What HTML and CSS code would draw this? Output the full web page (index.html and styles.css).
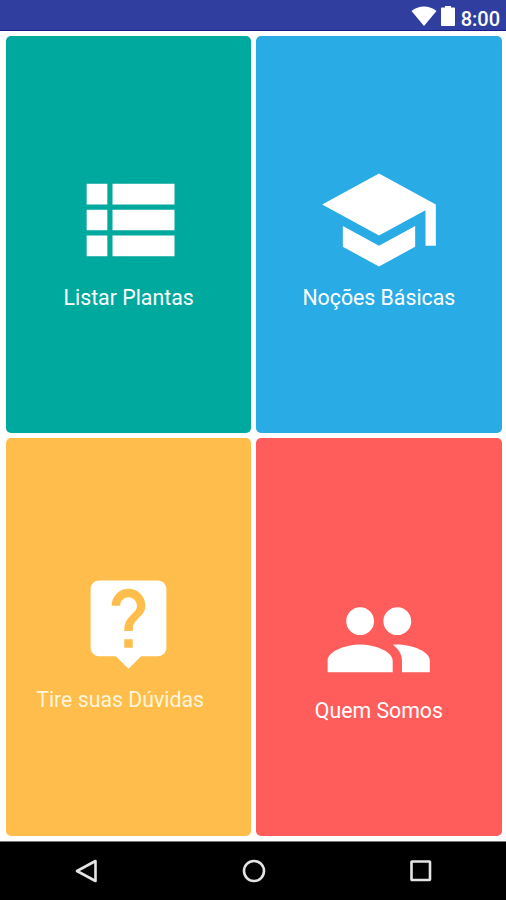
FILE: index.html
```html
<!DOCTYPE html>
<html lang="pt-BR">
<head>
    <meta charset="UTF-8">
    <title>Plantas</title>
    <link rel="stylesheet" href="styles.css">
</head>
<body>
    <div class="status-bar">
        <svg class="wifi" viewBox="0 0 26 20"><path d="M0.5 5C7.5-1 18.5-1 25.5 5L13 20z"/></svg>
        <svg class="battery" viewBox="0 0 14 20"><path d="M4 0h6v1.5h3q1 0 1 1V19q0 1-1 1H1q-1 0-1-1V2.5q0-1 1-1h3z"/></svg>
        <span class="clock">8:00</span>
    </div>

    <main class="menu">
        <a class="tile tile-plants">
            <svg class="icon" viewBox="0 0 24 24"><path d="M4 14h4v-4H4v4zm0 5h4v-4H4v4zM4 9h4V5H4v4zm5 5h12v-4H9v4zm0 5h12v-4H9v4zM9 5v4h12V5H9z"/></svg>
            <span class="label">Listar Plantas</span>
        </a>
        <a class="tile tile-basics">
            <svg class="icon" viewBox="0 0 24 24"><path d="M5 13.18v4L12 21l7-3.82v-4L12 17l-7-3.82zM12 3L1 9l11 6 9-4.91V17h2V9L12 3z"/></svg>
            <span class="label">Noções Básicas</span>
        </a>
        <a class="tile tile-help">
            <svg class="icon" viewBox="0 0 24 24"><path d="M19 2H5c-1.1 0-2 .9-2 2v14c0 1.1.9 2 2 2h4l3 3 3-3h4c1.1 0 2-.9 2-2V4c0-1.1-.9-2-2-2zm-6 16h-2v-2h2v2zm2.07-7.75l-.9.92C13.45 11.9 13 12.5 13 14h-2v-.5c0-1.1.45-2.1 1.17-2.83l1.24-1.26c.37-.36.59-.86.59-1.41 0-1.1-.9-2-2-2s-2 .9-2 2H8c0-2.21 1.79-4 4-4s4 1.79 4 4c0 .88-.36 1.68-.93 2.25z"/></svg>
            <span class="label">Tire suas Dúvidas</span>
        </a>
        <a class="tile tile-about">
            <svg class="icon" viewBox="0 0 24 24"><path d="M16 11c1.66 0 2.99-1.34 2.99-3S17.66 5 16 5c-1.66 0-3 1.34-3 3s1.34 3 3 3zm-8 0c1.66 0 2.99-1.34 2.99-3S9.66 5 8 5C6.34 5 5 6.34 5 8s1.34 3 3 3zm0 2c-2.33 0-7 1.17-7 3.5V19h14v-2.5c0-2.33-4.67-3.5-7-3.5zm8 0c-.29 0-.62.02-.97.05 1.16.84 1.97 1.97 1.97 3.45V19h6v-2.5c0-2.33-4.67-3.5-7-3.5z"/></svg>
            <span class="label">Quem Somos</span>
        </a>
    </main>

    <nav class="nav-bar">
        <svg viewBox="0 0 28 28"><path d="M23.5 4v20L5 14z"/></svg>
        <svg viewBox="0 0 28 28"><circle cx="14" cy="14" r="10"/></svg>
        <svg viewBox="0 0 28 28"><rect x="4.5" y="4.5" width="18.5" height="18.5" rx="0.5"/></svg>
    </nav>
</body>
</html>
```

FILE: styles.css
```css
body {
    margin: 0;
    height: 900px;
    display: flex;
    flex-direction: column;
    font-family: Roboto, sans-serif;
    background-color: white;
    color: white;
    overflow: hidden;
}
.status-bar {
    height: 31px;
    box-sizing: border-box;
    padding: 6px 6px 0 0;
    display: flex;
    justify-content: flex-end;
    align-items: flex-start;
    background-color: #303f9f;
    border-bottom: 1px solid #1c1c8c;
    fill: white;
}
.wifi {
    width: 26px;
    height: 20px;
    margin-right: 4px;
}
.battery {
    width: 14px;
    height: 20px;
    margin-right: 6px;
}
.clock {
    font-size: 20px;
    font-weight: 500;
    line-height: 26px;
}
.menu {
    flex: 1;
    display: grid;
    grid-template-columns: 1fr 1fr;
    grid-template-rows: 397px 398px;
    gap: 5px;
    padding: 5px 4.5px 5px 6px;
}
.tile {
    display: flex;
    flex-direction: column;
    align-items: center;
    box-sizing: border-box;
    border-radius: 5px;
    padding-top: 122px;
}
.icon {
    width: 124px;
    height: 124px;
    fill: white;
}
.label {
    margin-top: 3px;
    font-size: 21.3px;
    line-height: 26px;
    white-space: nowrap;
}
.tile-plants {
    background-color: #00a99d;
}
.tile-plants .icon {
    margin-right: 2px;
}
.tile-basics {
    background-color: #29abe5;
}
.tile-help {
    background-color: #ffbe4b;
    padding-top: 134px;
}
.tile-help .icon {
    width: 101px;
    height: 101px;
}
.tile-help .label {
    margin-top: 14px;
    padding-right: 17px; /* label sits a little left of the icon */
    color: #fff5dc;
}
.tile-about {
    background-color: #ff5d5b;
    padding-top: 146px;
}
.tile-about .icon {
    width: 111.5px;
    height: 111.5px;
}
.tile-about .label {
    margin-top: 2px;
}
.nav-bar {
    height: 59px;
    box-sizing: border-box;
    border-top: 1px solid #777;
    background-color: black;
    display: flex;
    justify-content: space-between;
    align-items: center;
    padding: 0 71px 0 72px;
}
.nav-bar svg {
    width: 28px;
    height: 28px;
    fill: none;
    stroke: #e4e4e4;
    stroke-width: 2.6;
    stroke-linejoin: round;
}
```
